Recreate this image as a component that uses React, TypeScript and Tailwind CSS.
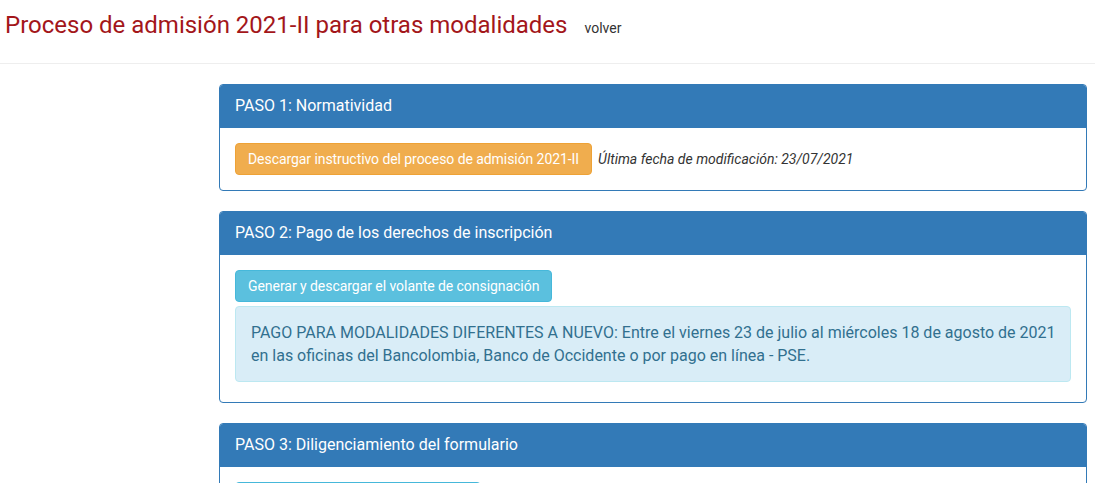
import React from "react";

// Step panels, styled like the old bootstrap "panel-primary"
type Step = {
  title: string;
  children: React.ReactNode;
};

function Panel({ title, children }: Step) {
  return (
    <section className="rounded-[4px] border border-[#337ab7] bg-white overflow-hidden">
      <div className="h-[43px] border-b border-[#337ab7] bg-[#337ab7] px-[15px] flex items-center text-[16px] leading-[16px] text-white">
        {title}
      </div>
      <div className="p-[15px]">{children}</div>
    </section>
  );
}

export default function App() {
  return (
    <div className="min-h-screen bg-white font-['Roboto',sans-serif] text-[#333]">
      {/* Page header */}
      <header className="h-[64px] border-b border-[#eee] px-[5px] pt-[11px]">
        <div className="flex items-baseline gap-[17px]">
          <h1 className="text-[24px] leading-[28px] font-normal text-[#a3161a]">
            Proceso de admisión 2021-II para otras modalidades
          </h1>
          <a href="#" className="text-[14px] text-[#333]">
            volver
          </a>
        </div>
      </header>

      <main className="ml-[219px] mr-[8px] pt-[20px] flex flex-col gap-[20px]">
        <Panel title="PASO 1: Normatividad">
          <div className="flex items-center">
            <button className="h-[32px] px-[12px] rounded-[4px] border border-[#eea236] bg-[#f0ad4e] text-[14px] tracking-[-0.07px] text-white">
              Descargar instructivo del proceso de admisión 2021-II
            </button>
            <span className="ml-[6px] text-[14px] italic text-[#333]">
              Última fecha de modificación: 23/07/2021
            </span>
          </div>
        </Panel>

        <Panel title="PASO 2: Pago de los derechos de inscripción">
          <button className="h-[32px] px-[12px] rounded-[4px] border border-[#46b8da] bg-[#5bc0de] text-[14px] tracking-[-0.05px] text-white">
            Generar y descargar el volante de consignación
          </button>
          <div className="mt-[4px] mb-[5px] rounded-[4px] border border-[#bce8f1] bg-[#d9edf7] px-[15px] py-[14px] text-[16px] leading-[23px] text-[#31708f]">
            <span className="block whitespace-nowrap">
              PAGO PARA MODALIDADES DIFERENTES A NUEVO: Entre el viernes 23 de julio al miércoles 18 de agosto de 2021
            </span>
            <span className="block whitespace-nowrap">
              en las oficinas del Bancolombia, Banco de Occidente o por pago en línea - PSE.
            </span>
          </div>
        </Panel>

        <Panel title="PASO 3: Diligenciamiento del formulario">
          <button className="h-[32px] w-[246px] px-[12px] rounded-[4px] border border-[#46b8da] bg-[#5bc0de] text-[14px] text-white">
            Diligenciar el formulario
          </button>
        </Panel>
      </main>
    </div>
  );
}
